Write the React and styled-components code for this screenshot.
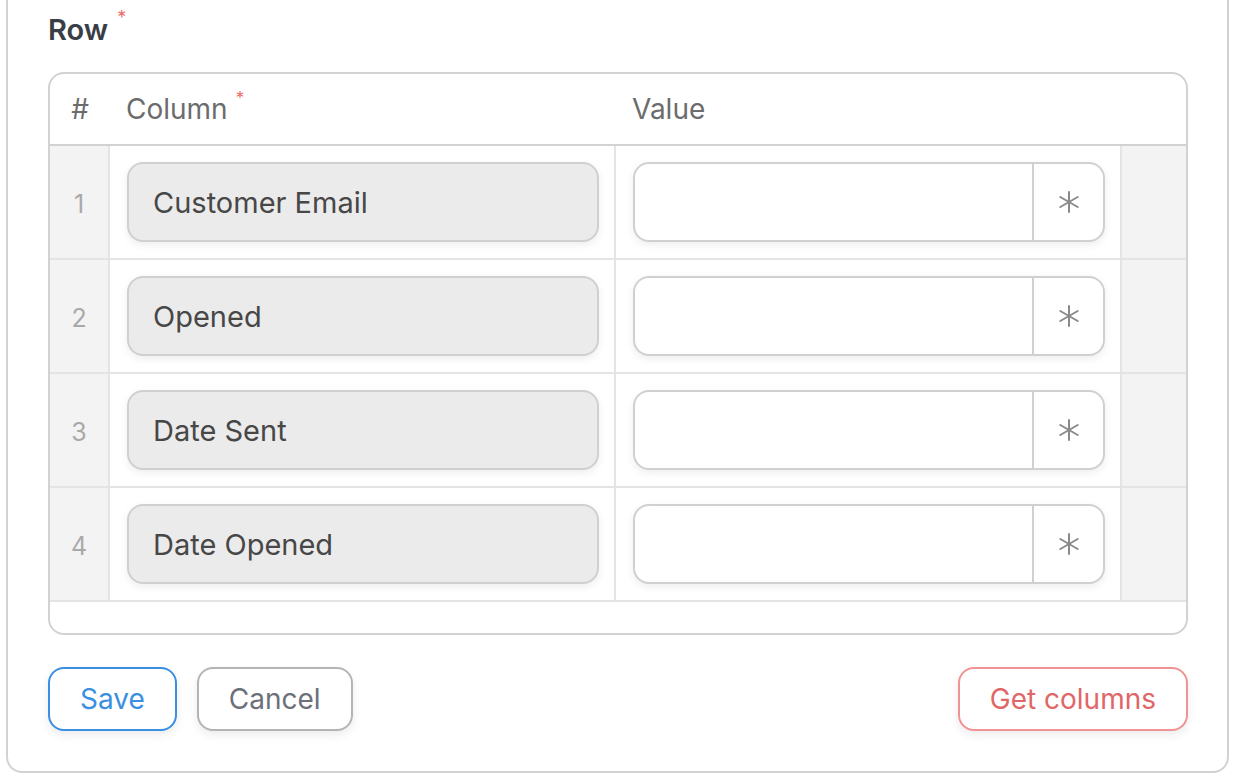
import React from "react";
import styled, { createGlobalStyle } from "styled-components";

const Global = createGlobalStyle`
  html, body { margin: 0; padding: 0; background: #ffffff; }
  body { font-family: Inter, "Noto Sans", "Liberation Sans", sans-serif; -webkit-font-smoothing: antialiased; }
  * { box-sizing: border-box; }
`;

const Panel = styled.div`
  margin: 0 7px 0 6px;
  height: 773px;
  border: 2px solid #d2d2d2;
  border-top: none;
  border-radius: 0 0 16px 16px;
  padding: 12px 39px 40px 40px;
  display: flex;
  flex-direction: column;
`;

const Label = styled.div`
  font-size: 29px;
  font-weight: 600;
  color: #393e46;
  line-height: 36px;
  height: 60px;
  display: flex;
  align-items: flex-start;
`;

const Req = styled.span`
  color: #ef6b6b;
  font-size: ${(p) => p.$size || 18}px;
  font-weight: 400;
  line-height: 1;
  margin-left: ${(p) => p.$gap || 6}px;
  margin-top: ${(p) => p.$top || -4}px;
`;

const Table = styled.div`
  border: 2px solid #d2d2d2;
  border-radius: 16px;
  overflow: hidden;
  padding-bottom: 31px;
`;

const Grid = styled.div`
  display: grid;
  grid-template-columns: 60px 506px 506px 1fr;
`;

const HeadRow = styled(Grid)`
  height: 72px;
  border-bottom: 2px solid #d2d2d2;
  align-items: center;
`;

const HeadCell = styled.div`
  font-size: 28px;
  color: #6c6c6c;
  padding: 0 16px;
  display: flex;
  align-items: flex-start;
  justify-content: ${(p) => (p.$center ? "center" : "flex-start")};
`;

const BodyRow = styled(Grid)`
  height: 114px;
  border-bottom: 2px solid #e4e4e4;
`;

const NumCell = styled.div`
  background: #f3f3f3;
  border-right: 2px solid #e4e4e4;
  display: flex;
  align-items: center;
  justify-content: center;
  padding-top: 3px;
  font-size: 25px;
  color: #a9a9a9;
`;

const Cell = styled.div`
  padding: 16px 15px 16px 17px;
  border-right: 2px solid #e4e4e4;
`;

const Filler = styled.div`
  background: #f3f3f3;
`;

const ColumnInput = styled.div`
  height: 80px;
  border: 2px solid #d0d0d0;
  border-radius: 16px;
  background: #ebebeb;
  box-shadow: 0 3px 8px rgba(0, 0, 0, 0.07);
  display: flex;
  align-items: center;
  padding: 0 24px;
  font-size: 29px;
  color: #474747;
`;

const ValueInput = styled.div`
  height: 80px;
  border: 2px solid #d0d0d0;
  border-radius: 16px;
  background: #ffffff;
  box-shadow: 0 3px 8px rgba(0, 0, 0, 0.07);
  display: flex;
  overflow: hidden;
`;

const ValueField = styled.div`
  flex: 1;
`;

const Addon = styled.div`
  width: 71px;
  border-left: 2px solid #d0d0d0;
  display: flex;
  align-items: center;
  justify-content: center;
`;

const Actions = styled.div`
  margin-top: 32px;
  display: flex;
  gap: 20px;
`;

const Button = styled.button`
  height: 64px;
  padding: 0 30px;
  border-radius: 16px;
  border: 2px solid ${(p) => p.$border};
  color: ${(p) => p.$color};
  background: #fff;
  font-family: inherit;
  font-size: 28px;
  box-shadow: 0 4px 10px rgba(0, 0, 0, 0.08);
  margin-left: ${(p) => (p.$push ? "auto" : "0")};
`;

const Star = () => (
  <svg width="22" height="22" viewBox="0 0 22 22">
    <g stroke="#8a8a8a" strokeWidth="2" strokeLinecap="round">
      <line x1="11" y1="1" x2="11" y2="21" />
      <line x1="2.3" y1="6" x2="19.7" y2="16" />
      <line x1="2.3" y1="16" x2="19.7" y2="6" />
    </g>
  </svg>
);

const rows = ["Customer Email", "Opened", "Date Sent", "Date Opened"];

export default function App() {
  return (
    <>
      <Global />
      <Panel>
        <Label>
          Row<Req $size={18} $gap={9} $top={-3}>*</Req>
        </Label>
        <Table>
          <HeadRow>
            <HeadCell $center>#</HeadCell>
            <HeadCell>
              Column<Req $size={17} $gap={8} $top={-2}>*</Req>
            </HeadCell>
            <HeadCell>Value</HeadCell>
            <div />
          </HeadRow>
          {rows.map((r, i) => (
            <BodyRow key={r}>
              <NumCell>{i + 1}</NumCell>
              <Cell>
                <ColumnInput>{r}</ColumnInput>
              </Cell>
              <Cell>
                <ValueInput>
                  <ValueField />
                  <Addon>
                    <Star />
                  </Addon>
                </ValueInput>
              </Cell>
              <Filler />
            </BodyRow>
          ))}
        </Table>
        <Actions>
          <Button $border="#3b8fe2" $color="#3b8fe2">Save</Button>
          <Button $border="#b4b4b4" $color="#6b7079">Cancel</Button>
          <Button $border="#f09393" $color="#e06767" $push>Get columns</Button>
        </Actions>
      </Panel>
    </>
  );
}
